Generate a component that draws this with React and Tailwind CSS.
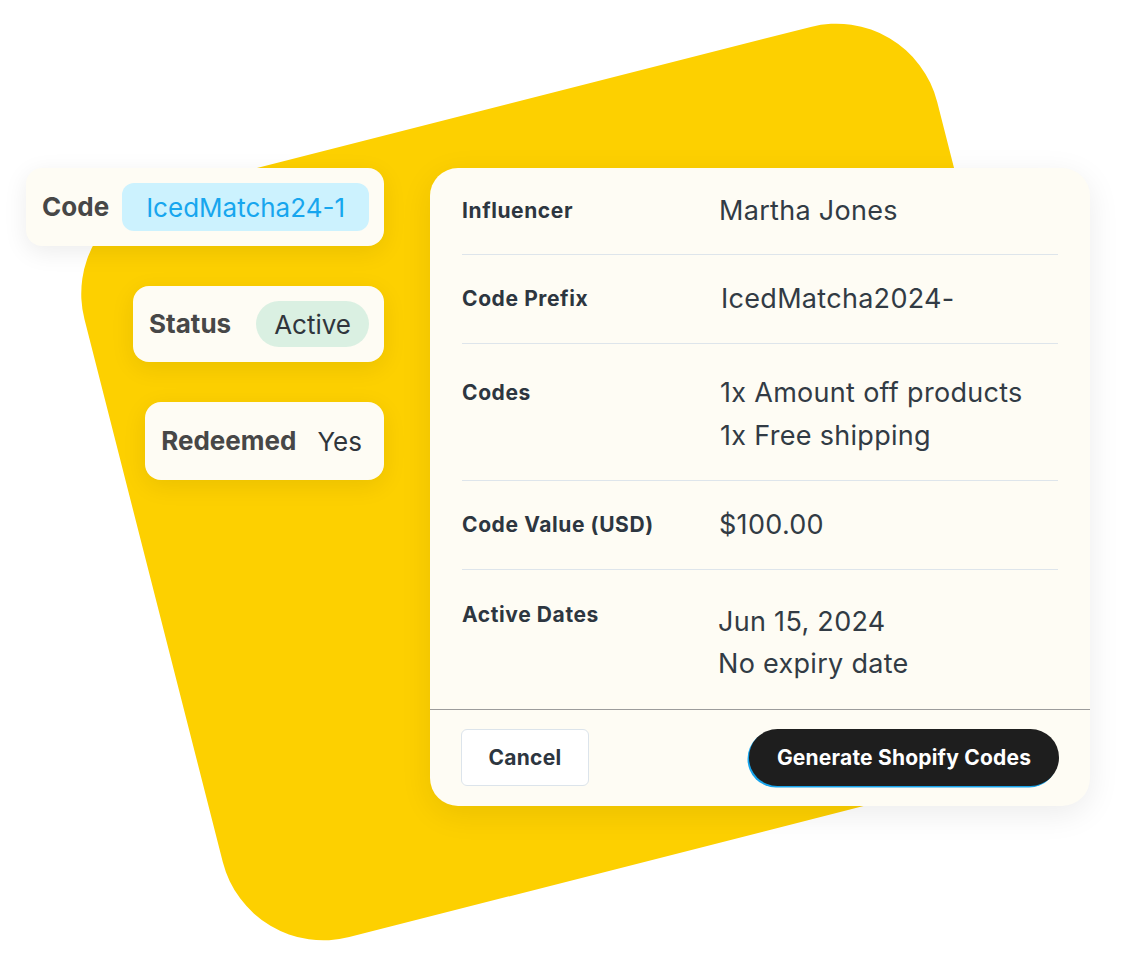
import React from 'react';

const rows = [
    { label: 'Influencer', values: ['Martha Jones'] },
    { label: 'Code Prefix', values: ['IcedMatcha2024-'] },
    { label: 'Codes', values: ['1x Amount off products', '1x Free shipping'] },
    { label: 'Code Value (USD)', values: ['$100.00'] },
    { label: 'Active Dates', values: ['Jun 15, 2024', 'No expiry date'] },
];

const labelCls = 'text-[21px] font-bold tracking-[0.6px] text-[#2D3640]';
const valueCls = 'text-[27px] tracking-[0.3px] text-[#323b44]';

const SideCard = ({ label, children, className = '' }) => (
    <div className={`flex items-center bg-[#FEFCF4] rounded-2xl shadow-[0_6px_24px_rgba(0,0,0,0.08)] ${className}`}>
        <span className="text-[26px] font-bold text-[#474747] leading-none">{label}</span>
        {children}
    </div>
);

const App = () => {
    return (
        <div
            className="relative w-[1136px] h-[960px] bg-white overflow-hidden"
            style={{ fontFamily: 'Inter, "Noto Sans", sans-serif' }}
        >
            {/* Yellow backdrop */}
            <div className="absolute left-[140px] top-[98px] w-[880px] h-[768px] rounded-[104px] bg-[#FDD000] -rotate-[14.3deg]" />

            <div className="relative flex pt-[168px] gap-[46px]">
                {/* Left cards */}
                <div className="w-[384px] flex flex-col items-end gap-[40px]">
                    <SideCard label="Code" className="pl-4 pr-[15px] py-[15px] gap-[13px]">
                        <span className="h-12 flex items-center px-6 rounded-xl bg-[#CCF2FE] text-[#17A6EE] text-[26px]">
                            IcedMatcha24-1
                        </span>
                    </SideCard>
                    <SideCard label="Status" className="pl-4 pr-[15px] py-[15px] gap-[25px]">
                        <span className="h-[46px] flex items-center px-[18px] rounded-full bg-[#DAF0E2] text-[#30363c] text-[26px]">
                            Active
                        </span>
                    </SideCard>
                    <SideCard label="Redeemed" className="pl-4 pr-[22px] h-[78px] gap-[21px]">
                        <span className="text-[#30363c] text-[26px]">Yes</span>
                    </SideCard>
                </div>

                {/* Detail panel */}
                <div className="w-[660px] bg-[#FEFCF4] rounded-[28px] shadow-[0_8px_32px_rgba(0,0,0,0.08)] overflow-hidden">
                    <div className="px-8">
                        <div className="flex items-center h-[87px] border-b border-[#DEE5EB]">
                            <span className={`w-[257px] ${labelCls}`}>{rows[0].label}</span>
                            <span className={valueCls}>{rows[0].values[0]}</span>
                        </div>
                        <div className="flex items-center h-[89px] border-b border-[#DEE5EB]">
                            <span className={`w-[259px] ${labelCls}`}>{rows[1].label}</span>
                            <span className={valueCls}>{rows[1].values[0]}</span>
                        </div>
                        <div className="flex items-start h-[137px] pt-[27px] border-b border-[#DEE5EB]">
                            <span className={`w-[258px] leading-[43px] ${labelCls}`}>{rows[2].label}</span>
                            <div className={`flex flex-col leading-[43px] ${valueCls}`}>
                                {rows[2].values.map((v) => (
                                    <span key={v}>{v}</span>
                                ))}
                            </div>
                        </div>
                        <div className="flex items-center h-[89px] border-b border-[#DEE5EB]">
                            <span className={`w-[257px] ${labelCls}`}>{rows[3].label}</span>
                            <span className={valueCls}>{rows[3].values[0]}</span>
                        </div>
                        <div className="flex items-start h-[139px] pt-[23px]">
                            <span className={`w-[256px] leading-[43px] ${labelCls}`}>{rows[4].label}</span>
                            <div className={`flex flex-col mt-[8px] leading-[42px] ${valueCls}`}>
                                {rows[4].values.map((v) => (
                                    <span key={v}>{v}</span>
                                ))}
                            </div>
                        </div>
                    </div>

                    {/* Footer */}
                    <div className="flex items-center justify-between h-[97px] px-[31px] pb-px border-t border-[#9C9C9C]">
                        <button className="w-[128px] h-[57px] bg-white border-[1.5px] border-[#DCE4EB] rounded-md text-[21px] font-bold tracking-[0.3px] text-[#2D3640]">
                            Cancel
                        </button>
                        <button className="w-[310px] h-[57px] bg-[#1E1E1E] rounded-full text-[21px] font-bold tracking-[0.2px] text-white shadow-[-1.5px_1.5px_0_0_#18A4EC]">
                            Generate Shopify Codes
                        </button>
                    </div>
                </div>
            </div>
        </div>
    );
};

export default App;
